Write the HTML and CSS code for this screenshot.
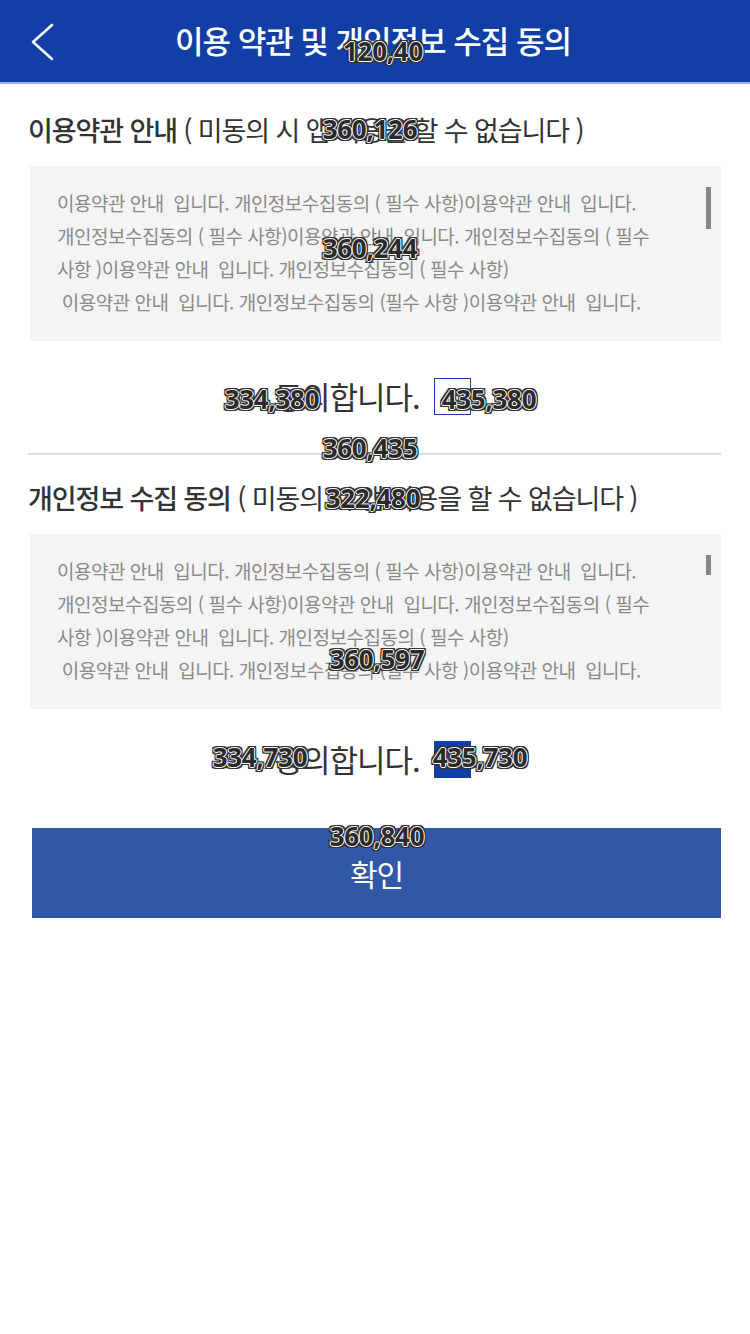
FILE: index.html
```html
<!DOCTYPE html>
<html lang="ko">
<head>
<meta charset="utf-8">
<title>이용 약관 및 개인정보 수집 동의</title>
<link rel="stylesheet" href="styles.css">
</head>
<body>
<div class="page">
  <header class="topbar">
    <button class="back" aria-label="뒤로">
      <svg width="40" height="50" viewBox="0 0 40 50"><polyline points="30,8 11,25 30,42" fill="none" stroke="#fff" stroke-width="2.6" stroke-linecap="round" stroke-linejoin="round"/></svg>
    </button>
    <h1 class="title">이용 약관 및 개인정보 수집 동의</h1>
  </header>

  <main class="content">
    <section class="terms">
      <h2 class="sec-title"><b>이용약관 안내</b> ( 미동의 시 앱 이용을 할 수 없습니다 )</h2>
      <div class="box">
        <p class="box-text">이용약관 안내  입니다. 개인정보수집동의 ( 필수 사항)이용약관 안내  입니다.
개인정보수집동의 ( 필수 사항)이용약관 안내  입니다. 개인정보수집동의 ( 필수
사항 )이용약관 안내  입니다. 개인정보수집동의 ( 필수 사항)
 이용약관 안내  입니다. 개인정보수집동의 (필수 사항 )이용약관 안내  입니다.</p>
        <span class="scroll"></span>
      </div>
      <label class="agree first">
        <span class="agree-text">동의합니다.</span>
        <span class="check"></span>
      </label>
    </section>

    <hr class="divider">

    <section class="terms">
      <h2 class="sec-title"><b>개인정보 수집 동의</b> ( 미동의 시 앱 이용을 할 수 없습니다 )</h2>
      <div class="box">
        <p class="box-text">이용약관 안내  입니다. 개인정보수집동의 ( 필수 사항)이용약관 안내  입니다.
개인정보수집동의 ( 필수 사항)이용약관 안내  입니다. 개인정보수집동의 ( 필수
사항 )이용약관 안내  입니다. 개인정보수집동의 ( 필수 사항)
 이용약관 안내  입니다. 개인정보수집동의 (필수 사항 )이용약관 안내  입니다.</p>
        <span class="scroll short"></span>
      </div>
      <label class="agree second">
        <span class="agree-text">동의합니다.</span>
        <span class="check on"></span>
      </label>
    </section>

    <button class="confirm">확인</button>
  </main>

  <div class="marks">
    <span class="mark" style="left:383px;top:51px">120,40</span>
    <span class="mark" style="left:370px;top:129px">360,126</span>
    <span class="mark" style="left:370px;top:248px">360,244</span>
    <span class="mark" style="left:272px;top:399px">334,380</span>
    <span class="mark" style="left:489px;top:399px">435,380</span>
    <span class="mark" style="left:370px;top:448px">360,435</span>
    <span class="mark" style="left:373px;top:498px">322,480</span>
    <span class="mark" style="left:377px;top:659px">360,597</span>
    <span class="mark" style="left:260px;top:757px">334,730</span>
    <span class="mark" style="left:480px;top:757px">435,730</span>
    <span class="mark" style="left:377px;top:836px">360,840</span>
  </div>
</div>
</body>
</html>
```
FILE: styles.css
```css
* { box-sizing: border-box; }
html, body { margin: 0; padding: 0; background: #fff; }
body {
  font-family: "Noto Sans CJK KR", "Noto Sans", sans-serif;
  color: #333;
  width: 750px;
}
.page { position: relative; min-height: 1334px; }

.topbar {
  height: 84px;
  background: #123fa6;
  border-bottom: 2px solid #9ab3ec;
  display: flex;
  align-items: center;
  justify-content: center;
  position: relative;
}
.back {
  position: absolute;
  left: 22px;
  top: 17px;
  padding: 0;
  border: 0;
  background: none;
  width: 40px;
  height: 50px;
}
.back svg { display: block; }
.title {
  margin: 0 0 0 -4px;
  font-size: 31px;
  font-weight: 500;
  letter-spacing: -1px;
  color: #fff;
  line-height: 40px;
  padding-bottom: 2px;
}

.content {
  padding: 0 29px 0 28px;
  display: flex;
  flex-direction: column;
}
.terms { display: flex; flex-direction: column; }
.sec-title {
  margin: 26px 0 0 0;
  font-size: 27px;
  line-height: 40px;
  font-weight: 400;
  letter-spacing: -1.1px;
  color: #333;
}
.sec-title b { font-weight: 500; }

.box {
  position: relative;
  margin: 16px 0 0 2px;
  height: 175px;
  background: #f4f4f4;
  padding: 20px 10px 0 27px;
}
.box-text {
  margin: 0;
  white-space: pre-wrap;
  font-size: 19px;
  line-height: 33px;
  letter-spacing: -0.5px;
  color: #8a8a8a;
}
.scroll {
  position: absolute;
  right: 10px;
  top: 21px;
  width: 5px;
  height: 42px;
  background: #888;
}
.scroll.short { height: 20px; }

.agree {
  display: flex;
  align-items: center;
  justify-content: center;
  gap: 14px;
  height: 36px;
  margin-right: 4px;
}
.agree.first { margin-top: 37px; }
.agree.second { margin-top: 32px; }
.agree-text {
  font-size: 31px;
  letter-spacing: -1px;
  color: #333;
  line-height: 36px;
}
.check {
  width: 37px;
  height: 37px;
  border: 1.5px solid #123fa6;
  background: #fff;
}
.check.on { background: #123fa6; }

.divider {
  margin: 39px 0 0 0;
  border: 0;
  height: 2px;
  background: #dcdcdc;
}
.terms + .divider + .terms .sec-title { margin-top: 23px; }

.confirm {
  margin: 51px 0 0 4px;
  height: 90px;
  border: 0;
  background: #3157a7;
  color: #fff;
  font-family: "Noto Sans CJK KR", "Noto Sans", sans-serif;
  font-size: 30px;
  letter-spacing: -1px;
  padding: 0;
}

.marks { position: absolute; inset: 0; pointer-events: none; }
.mark {
  position: absolute;
  transform: translate(-50%, -50%);
  font-family: "Noto Sans", "Liberation Sans", sans-serif;
  font-weight: 700;
  font-size: 26px;
  letter-spacing: -0.3px;
  color: #2a2a2a;
  white-space: nowrap;
  text-shadow:
    1px 0 0 #fff, -1px 0 0 #fff, 0 1px 0 #fff, 0 -1px 0 #fff,
    2px 0 0 #333, -2px 0 0 #333, 0 2px 0 #333, 0 -2px 0 #333,
    2px 2px 0 #333, -2px -2px 0 #333, 2px -2px 0 #333, -2px 2px 0 #333;
}
```
